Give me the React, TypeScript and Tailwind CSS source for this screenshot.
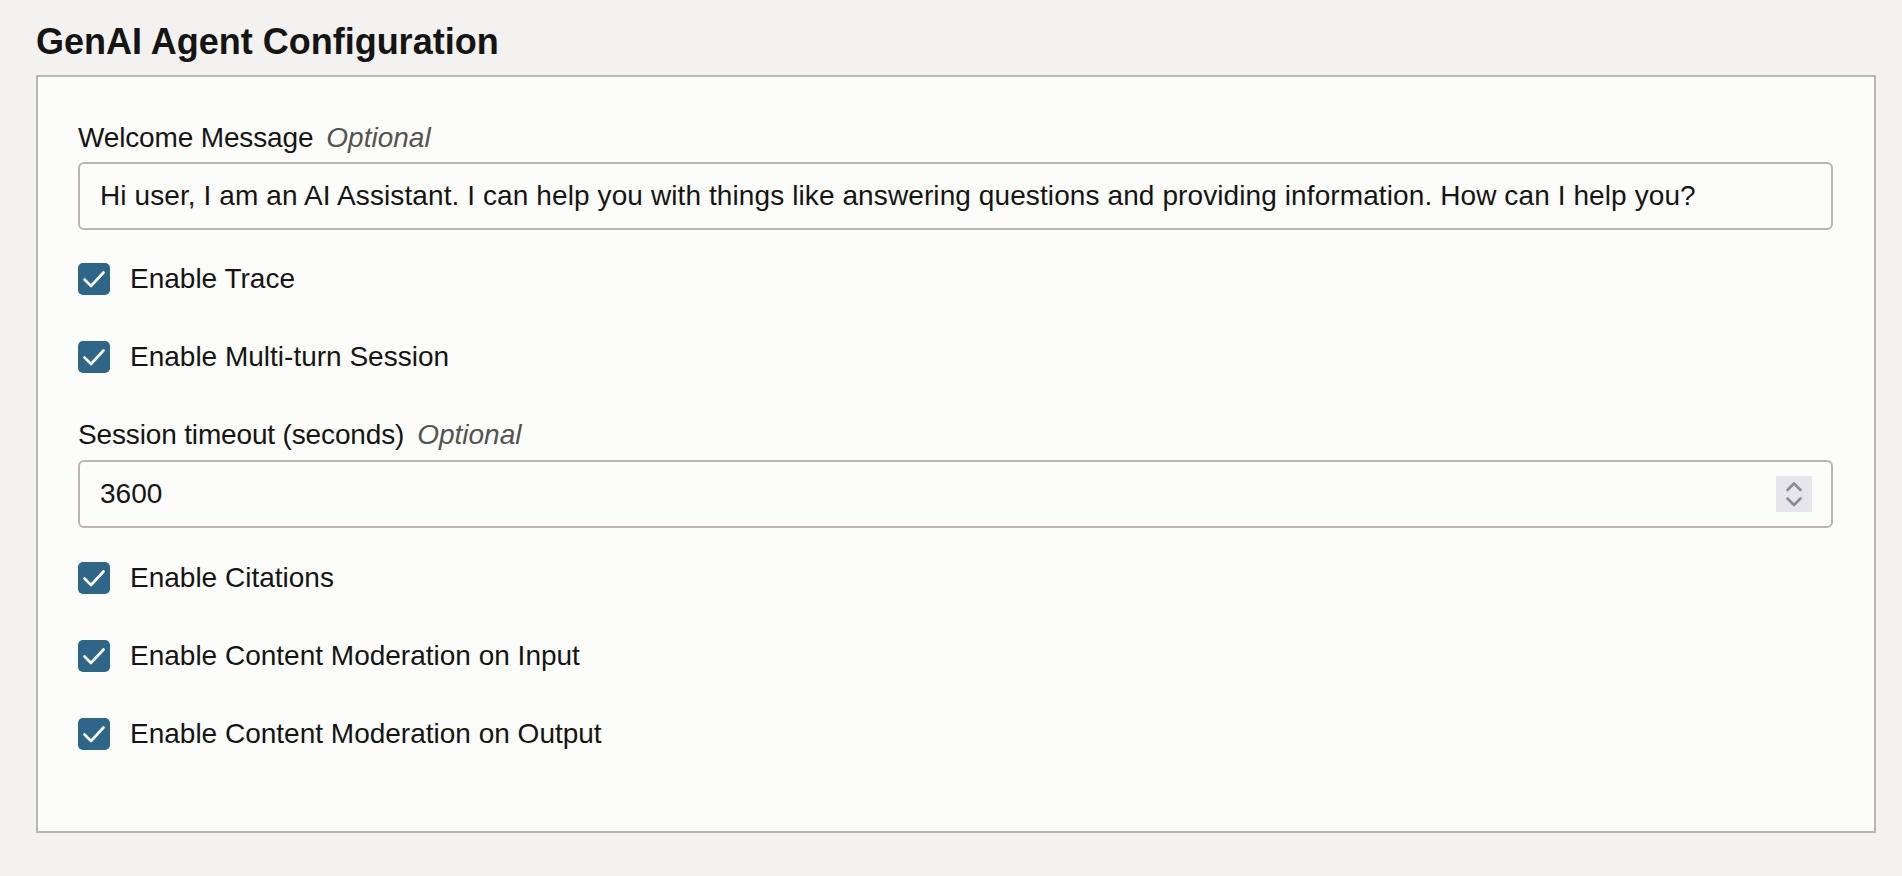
import React from "react";

const font = "font-['Liberation_Sans',Arial,Helvetica,sans-serif]";

function Check({ label }: { label: string }) {
  return (
    <div className="flex items-center h-[32px]">
      <div className="w-[32px] h-[32px] rounded-[5px] bg-[#2d6689] flex items-center justify-center shrink-0">
        <svg width="32" height="32" viewBox="0 0 32 32" fill="none">
          <path d="M6.5 16.5 L13 23 L25.5 9.5" stroke="#ffffff" strokeWidth="2.6" strokeLinecap="round" strokeLinejoin="round" />
        </svg>
      </div>
      <span className="ml-[20px] text-[28px] leading-[32px] text-[#161513] whitespace-nowrap">{label}</span>
    </div>
  );
}

function Label({ text }: { text: string }) {
  return (
    <div className="text-[28px] leading-[36px] text-[#161513] whitespace-nowrap">
      <span className="tracking-[-0.15px]">{text}</span>
      <span className="ml-[13px] italic text-[#55534f]">Optional</span>
    </div>
  );
}

export default function App() {
  return (
    <div className={`${font} min-h-screen bg-[#f3f2f1] pl-[36px] pr-[26px] pt-[20px]`}>
      <h1 className="text-[36px] leading-[44px] font-bold text-[#161513]">GenAI Agent Configuration</h1>
      <div className="mt-[11px] border-2 border-[#b9b6b0] bg-[#fcfcfb] pl-[40px] pr-[41px] pt-[43px] pb-[81px] flex flex-col">
        <Label text="Welcome Message" />
        <div className="mt-[6px] h-[68px] border-2 border-[#b9b6b0] rounded-[6px] bg-[#fcfcfb] flex items-center px-[20px]">
          <span className="text-[28px] text-[#161513] whitespace-nowrap tracking-[0.1px]">
            Hi user, I am an AI Assistant. I can help you with things like answering questions and providing information. How can I help you?
          </span>
        </div>
        <div className="mt-[33px]">
          <Check label="Enable Trace" />
        </div>
        <div className="mt-[46px]">
          <Check label="Enable Multi-turn Session" />
        </div>
        <div className="mt-[44px]">
          <Label text="Session timeout (seconds)" />
        </div>
        <div className="mt-[7px] h-[68px] border-2 border-[#b9b6b0] rounded-[6px] bg-[#fcfcfb] flex items-center pl-[20px] pr-[19px]">
          <span className="flex-1 text-[28px] text-[#161513]">3600</span>
          <div className="w-[36px] h-[36px] bg-[#e6e6ea] flex items-center justify-center">
            <svg width="36" height="36" viewBox="0 0 36 36" fill="none">
              <path d="M11.5 14 L18 7.5 L24.5 14" stroke="#8a8996" strokeWidth="2.6" strokeLinecap="round" strokeLinejoin="round" />
              <path d="M11.5 22.5 L18 29 L24.5 22.5" stroke="#8a8996" strokeWidth="2.6" strokeLinecap="round" strokeLinejoin="round" />
            </svg>
          </div>
        </div>
        <div className="mt-[34px]">
          <Check label="Enable Citations" />
        </div>
        <div className="mt-[46px]">
          <Check label="Enable Content Moderation on Input" />
        </div>
        <div className="mt-[46px]">
          <Check label="Enable Content Moderation on Output" />
        </div>
      </div>
    </div>
  );
}
